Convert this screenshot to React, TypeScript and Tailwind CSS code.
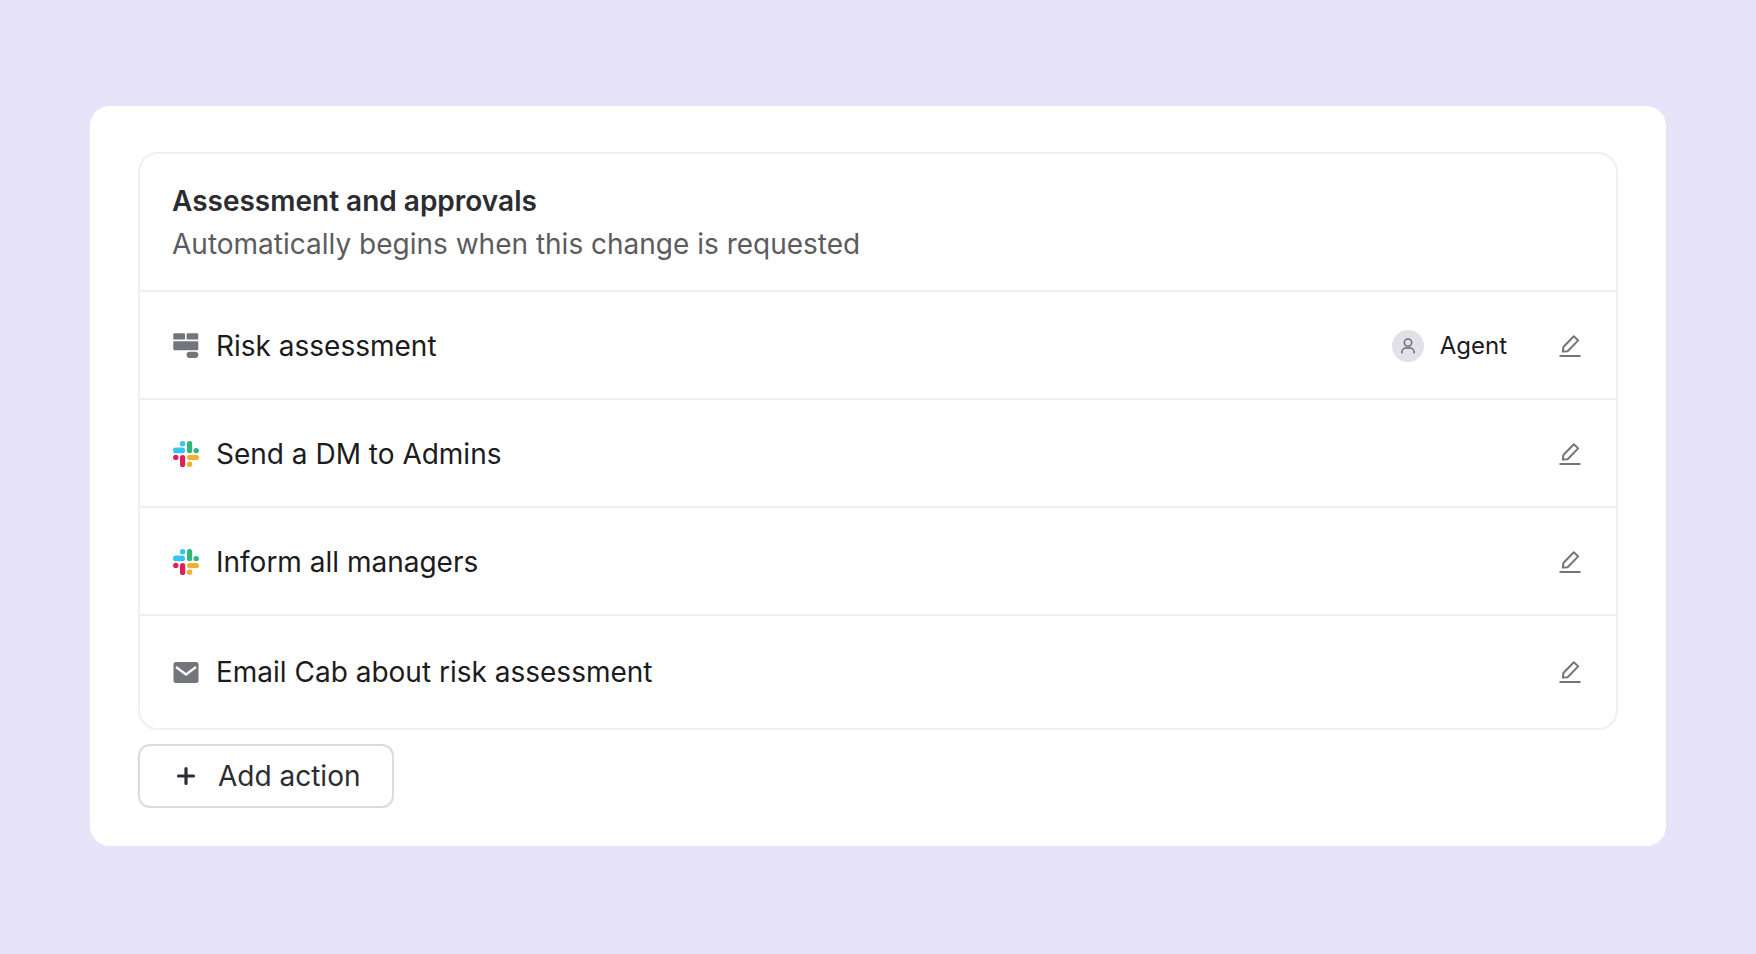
import React from "react";

const Pencil = () => (
  <svg width="24" height="24" viewBox="0 0 24 24" fill="none" stroke="#74747c" strokeWidth="2" className="shrink-0">
    <path d="M4.8 17.6 5.4 13 15.8 2.2 20.2 6.4 9.6 17.2 Z" strokeLinejoin="round" />
    <path d="M1.5 22H22.5" strokeWidth="2" />
  </svg>
);

const Slack = () => (
  <svg width="26" height="26" viewBox="0 0 26 26" className="shrink-0">
    <rect x="0" y="6.6" width="12" height="5.6" rx="2.8" fill="#36c5f0" />
    <circle cx="9.6" cy="2.8" r="2.7" fill="#36c5f0" />
    <rect x="14" y="0" width="5.2" height="12.2" rx="2.6" fill="#2eb67d" />
    <circle cx="23.2" cy="9.6" r="2.7" fill="#2eb67d" />
    <rect x="14" y="14" width="12" height="5" rx="2.5" fill="#ecb22e" />
    <circle cx="16.6" cy="23.2" r="2.7" fill="#ecb22e" />
    <rect x="7" y="14" width="5.2" height="12" rx="2.6" fill="#e01e5a" />
    <circle cx="2.8" cy="16.4" r="2.7" fill="#e01e5a" />
  </svg>
);

const Blocks = () => (
  <svg width="26" height="26" viewBox="0 0 26 26" className="shrink-0" fill="#74747c">
    <rect x="0.3" y="0.3" width="11.7" height="6.3" rx="1.2" />
    <rect x="13.6" y="0.3" width="11.7" height="6.3" rx="1.2" />
    <rect x="0.3" y="8.2" width="25" height="9" rx="1.2" />
    <rect x="13.6" y="18.7" width="11.7" height="6.3" rx="3" />
  </svg>
);

const Mail = () => (
  <svg width="26" height="26" viewBox="0 0 26 26" className="shrink-0">
    <rect x="0.5" y="3" width="25" height="21" rx="2.5" fill="#74747c" />
    <path d="M3 8 13 15.5 23 8" fill="none" stroke="#fff" strokeWidth="2.2" />
  </svg>
);

const Row = ({ icon, label, h, agent }: { icon: React.ReactNode; label: string; h: string; agent?: boolean }) => (
  <div className={`flex items-center pl-[33px] pr-[34px] ${h}`}>
    <div className="mr-[17px] flex">{icon}</div>
    <span className="text-[28px] leading-[34px] text-[#1b1b20]">{label}</span>
    <div className="ml-auto flex items-center">
      {agent && (
        <div className="mr-[51px] flex items-center">
          <div className="mr-4 flex h-8 w-8 items-center justify-center rounded-full bg-[#e2e1e7]">
            <svg width="18" height="18" viewBox="0 0 18 18" fill="none" stroke="#6e6e7a" strokeWidth="1.5">
              <circle cx="9" cy="5.6" r="3.7" />
              <path d="M2.8 16.5v-1.2c0-2.6 2-4.3 4.4-4.3h3.6c2.4 0 4.4 1.7 4.4 4.3v1.2" />
            </svg>
          </div>
          <span className="text-[24px] leading-[30px] text-[#1b1b20]">Agent</span>
        </div>
      )}
      <Pencil />
    </div>
  </div>
);

export default function App() {
  return (
    <div className="min-h-[954px] bg-[#e7e4fa] px-[90px] pt-[106px] font-['Inter',sans-serif]">
      <div className="h-[740px] rounded-[20px] bg-white px-[48px] pt-[46px]">
        <div className="h-[578px] divide-y-2 divide-[#f0f0f1] rounded-[20px] border-2 border-[#f0f0f1]">
          <div className="h-[138px] pl-[32px] pt-[30px]">
            <div className="text-[28px] leading-[34px] font-semibold text-[#2c2c33]">Assessment and approvals</div>
            <div className="mt-[9px] text-[28px] leading-[34px] text-[#5c5c60]">
              Automatically begins when this change is requested
            </div>
          </div>
          <Row h="h-[108px] pt-[2px]" icon={<Blocks />} label="Risk assessment" agent />
          <Row h="h-[108px] pt-[2px]" icon={<Slack />} label="Send a DM to Admins" />
          <Row h="h-[108px] pt-[2px]" icon={<Slack />} label="Inform all managers" />
          <Row h="h-[112px]" icon={<Mail />} label="Email Cab about risk assessment" />
        </div>
        <button className="mt-[14px] flex h-[64px] w-[256px] items-center rounded-[12px] border-2 border-[#dcdcdc] pl-[36px] text-[#2c2c33]">
          <svg width="20" height="20" viewBox="0 0 20 20" stroke="#2c2c33" strokeWidth="3.2" strokeLinecap="round" className="mr-[22px]">
            <path d="M10 2.5v15M2.5 10h15" />
          </svg>
          <span className="text-[28px] leading-[34px]">Add action</span>
        </button>
      </div>
    </div>
  );
}
